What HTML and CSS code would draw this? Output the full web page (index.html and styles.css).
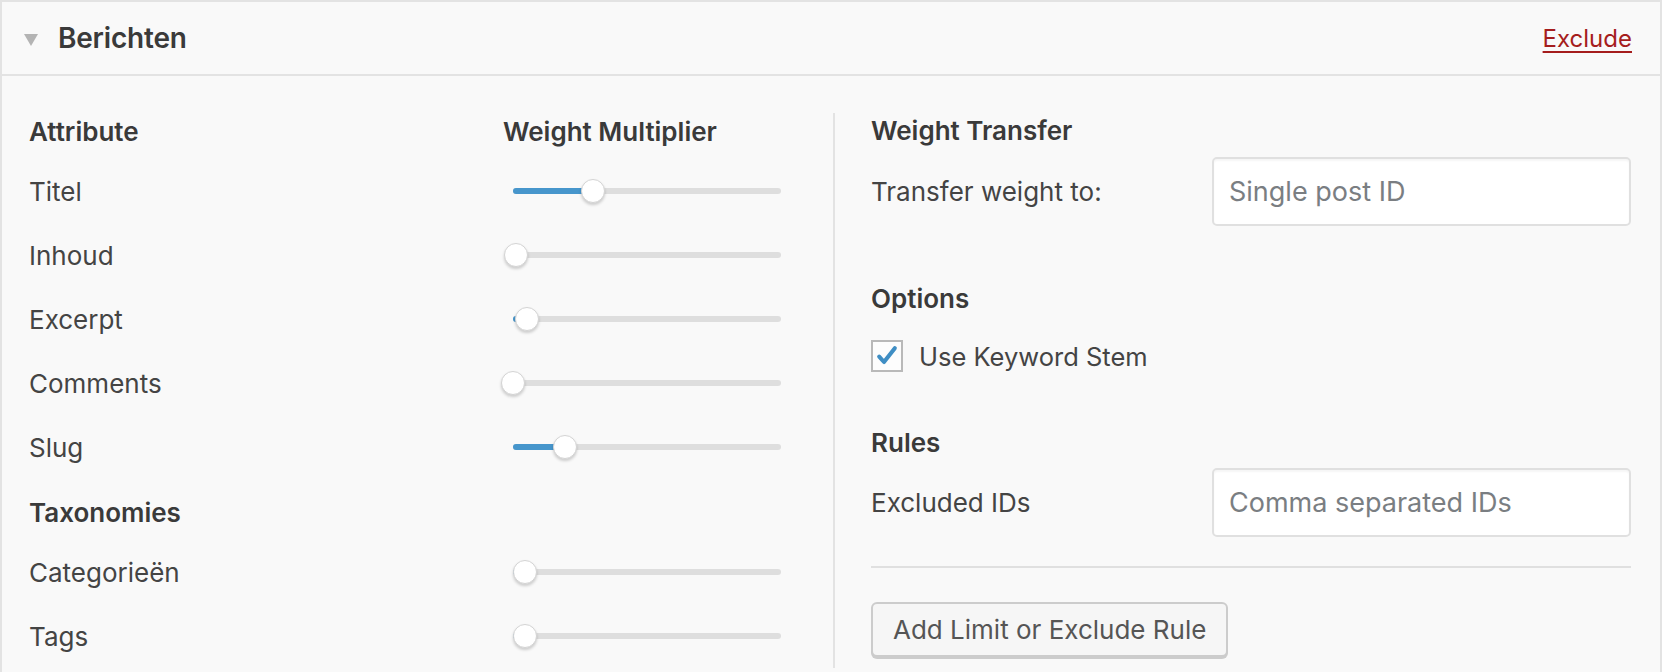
FILE: index.html
```html
<!DOCTYPE html>
<html lang="nl">
<head>
    <meta charset="UTF-8">
    <meta name="viewport" content="width=device-width, initial-scale=1.0">
    <title>Berichten</title>
    <link rel="stylesheet" href="styles.css">
</head>
<body>
    <div class="panel">
        <div class="panel-header">
            <span class="toggle"></span>
            <h2 class="panel-title">Berichten</h2>
            <a class="exclude-link" href="#">Exclude</a>
        </div>

        <div class="panel-body">
            <div class="weights">
                <div class="row heading-row">
                    <span class="col-label">Attribute</span>
                    <span class="col-slider">Weight Multiplier</span>
                </div>
                <div class="row">
                    <span class="col-label">Titel</span>
                    <div class="col-slider">
                        <div class="slider"><div class="fill" style="width: 80px"></div><span class="thumb" style="left: 80px"></span></div>
                    </div>
                </div>
                <div class="row">
                    <span class="col-label">Inhoud</span>
                    <div class="col-slider">
                        <div class="slider"><div class="fill" style="width: 3px"></div><span class="thumb" style="left: 3px"></span></div>
                    </div>
                </div>
                <div class="row">
                    <span class="col-label">Excerpt</span>
                    <div class="col-slider">
                        <div class="slider"><div class="fill" style="width: 14px"></div><span class="thumb" style="left: 14px"></span></div>
                    </div>
                </div>
                <div class="row">
                    <span class="col-label">Comments</span>
                    <div class="col-slider">
                        <div class="slider"><div class="fill" style="width: 0px"></div><span class="thumb" style="left: 0px"></span></div>
                    </div>
                </div>
                <div class="row">
                    <span class="col-label">Slug</span>
                    <div class="col-slider">
                        <div class="slider"><div class="fill" style="width: 52px"></div><span class="thumb" style="left: 52px"></span></div>
                    </div>
                </div>
                <div class="row heading-row taxonomies">
                    <span class="col-label">Taxonomies</span>
                </div>
                <div class="row">
                    <span class="col-label">Categorieën</span>
                    <div class="col-slider">
                        <div class="slider"><div class="fill" style="width: 12px"></div><span class="thumb" style="left: 12px"></span></div>
                    </div>
                </div>
                <div class="row">
                    <span class="col-label">Tags</span>
                    <div class="col-slider">
                        <div class="slider"><div class="fill" style="width: 12px"></div><span class="thumb" style="left: 12px"></span></div>
                    </div>
                </div>
            </div>

            <div class="settings">
                <h3>Weight Transfer</h3>
                <div class="field">
                    <label for="transfer">Transfer weight to:</label>
                    <input id="transfer" type="text" placeholder="Single post ID">
                </div>

                <h3 class="options-title">Options</h3>
                <label class="check">
                    <span class="checkbox">
                        <svg viewBox="0 0 20 20" width="24" height="24"><path d="M3.5 10.5 L7.5 15 L16.5 3.5" fill="none" stroke="#3f8ec4" stroke-width="3.4" stroke-linecap="round" stroke-linejoin="round"/></svg>
                    </span>
                    Use Keyword Stem
                </label>

                <h3 class="rules-title">Rules</h3>
                <div class="field rules-field">
                    <label for="excluded">Excluded IDs</label>
                    <input id="excluded" type="text" placeholder="Comma separated IDs">
                </div>

                <hr>

                <button class="button">Add Limit or Exclude Rule</button>
            </div>
        </div>
    </div>
</body>
</html>
```

FILE: styles.css
```css
body {
    margin: 0;
    font-family: Inter, "Liberation Sans", sans-serif;
    color: #444444;
    background: #f9f9f9;
    overflow: hidden;
}

.panel {
    border: 2px solid #e3e3e3;
    border-bottom: none;
    background: #f9f9f9;
    height: 700px;
}

.panel-header {
    display: flex;
    align-items: center;
    height: 72px;
    padding: 0 28px 0 22px;
    border-bottom: 2px solid #e3e3e3;
}

.toggle {
    width: 0;
    height: 0;
    border-left: 7px solid transparent;
    border-right: 7px solid transparent;
    border-top: 12px solid #b4b4b4;
    margin-right: 20px;
    margin-top: 3px;
}

.panel-title {
    margin: 0;
    font-size: 28px;
    font-weight: 600;
    color: #3a3a3a;
    letter-spacing: -0.2px;
}

.exclude-link {
    margin-left: auto;
    font-size: 24px;
    color: #a51d1d;
    text-decoration: underline;
    text-underline-offset: 4px;
    text-decoration-thickness: 2px;
}

.panel-body {
    display: flex;
    padding: 0 29px 0 27px;
}

.weights {
    flex-shrink: 0;
    width: 804px;
    padding-top: 27px;
}

.row {
    display: flex;
    align-items: center;
    height: 64px;
    font-size: 26px;
}

.heading-row {
    height: 56px;
    font-weight: 600;
    color: #3a3a3a;
}

.taxonomies {
    margin-top: 5px;
}

.col-label {
    width: 474px;
}

.col-slider {
    width: 290px;
    white-space: nowrap;
}

.slider {
    position: relative;
    width: 268px;
    height: 6px;
    margin-left: 10px;
    border-radius: 3px;
    background: #dedede;
}

.fill {
    height: 100%;
    border-radius: 3px;
    background: #4796cc;
}

.thumb {
    position: absolute;
    top: -9px;
    width: 22px;
    height: 22px;
    margin-left: -12px;
    border: 1px solid #d4d4d4;
    border-radius: 50%;
    background: #ffffff;
    box-shadow: 0 2px 3px rgba(0, 0, 0, 0.18);
}

.settings {
    flex: 1;
    min-width: 0;
    margin-top: 37px;
    padding-left: 36px;
    border-left: 2px solid #e3e3e3;
    font-size: 26px;
}

.settings h3 {
    margin: 0;
    height: 36px;
    line-height: 36px;
    font-size: 26px;
    font-weight: 600;
    color: #3a3a3a;
}

.field {
    display: flex;
    align-items: center;
    margin-top: 8px;
}

.field label {
    width: 341px;
    flex-shrink: 0;
}

.field input {
    flex: 1;
    min-width: 0;
    box-sizing: border-box;
    height: 69px;
    padding: 0 15px;
    border: 2px solid #e0e0e0;
    border-radius: 5px;
    background: #ffffff;
    box-shadow: inset 0 2px 2px rgba(0, 0, 0, 0.04);
    font-family: inherit;
    font-size: 27px;
    color: #444444;
}

.field input::placeholder {
    color: #7a7e82;
}

.options-title {
    margin-top: 55px !important;
}

.check {
    display: flex;
    align-items: center;
    gap: 16px;
    margin-top: 23px;
    height: 32px;
    font-size: 25.5px;
}

.checkbox {
    display: flex;
    align-items: center;
    justify-content: center;
    box-sizing: border-box;
    width: 32px;
    height: 32px;
    border: 2px solid #b9b9b9;
    background: #fdfdfd;
}

.rules-title {
    margin-top: 53px !important;
}

.rules-field {
    margin-top: 7px;
}

hr {
    margin: 29px 0 0;
    border: none;
    border-top: 2px solid #e0e0e0;
}

.button {
    margin-top: 34px;
    height: 55px;
    padding: 0 20px;
    border: 2px solid #cccccc;
    border-radius: 6px;
    background: #f6f6f6;
    box-shadow: 0 2px 0 #cccccc;
    font-family: inherit;
    font-size: 26px;
    color: #555555;
    cursor: pointer;
}
```
